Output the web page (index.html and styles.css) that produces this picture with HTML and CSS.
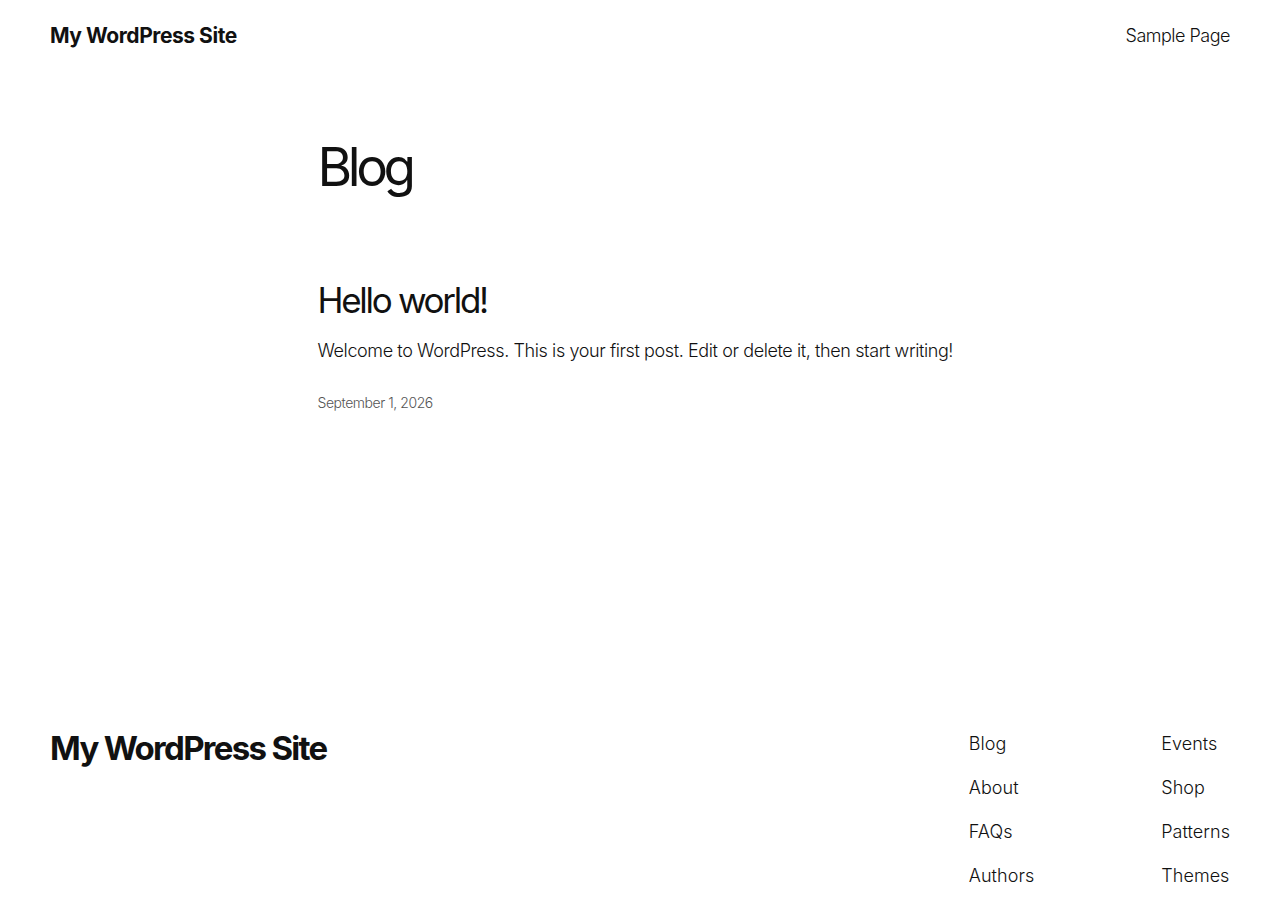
FILE: index.html
```html
<!DOCTYPE html>
<html lang="en">
<head>
  <meta charset="UTF-8" />
  <meta name="viewport" content="width=device-width, initial-scale=1.0" />
  <title>Blog – My WordPress Site</title>
  <link rel="stylesheet" href="styles.css">
</head>
<body>
  <header class="site-header">
    <a class="site-title" href="#">My WordPress Site</a>
    <nav class="main-nav">
      <a href="#">Sample Page</a>
    </nav>
  </header>

  <main class="site-main">
    <h1 class="page-title">Blog</h1>

    <article class="post">
      <h2 class="post-title"><a href="#">Hello world!</a></h2>
      <p class="post-excerpt">Welcome to WordPress. This is your first post. Edit or delete it, then start writing!</p>
      <div class="post-date">September 1, 2026</div>
    </article>
  </main>

  <footer class="site-footer">
    <a class="footer-title" href="#">My WordPress Site</a>
    <div class="footer-nav">
      <ul>
        <li><a href="#">Blog</a></li>
        <li><a href="#">About</a></li>
        <li><a href="#">FAQs</a></li>
        <li><a href="#">Authors</a></li>
      </ul>
      <ul>
        <li><a href="#">Events</a></li>
        <li><a href="#">Shop</a></li>
        <li><a href="#">Patterns</a></li>
        <li><a href="#">Themes</a></li>
      </ul>
    </div>
  </footer>
</body>
</html>
```

FILE: styles.css
```css
body {
  margin: 0;
  font-family: Inter, "Noto Sans", sans-serif;
  color: #111111;
  background: #ffffff;
  -webkit-font-smoothing: antialiased;
}

a {
  color: inherit;
  text-decoration: none;
}

.site-header {
  display: flex;
  justify-content: space-between;
  align-items: center;
  height: 70px;
  padding: 0 50px;
}

.site-title {
  font-size: 21px;
  font-weight: 700;
  letter-spacing: -0.45px;
}

.main-nav a {
  font-size: 18px;
  font-weight: 300;
  letter-spacing: -0.5px;
}

.site-main {
  width: 645px;
  margin: 0 auto;
  padding-top: 66px;
  min-height: 591px;
}

.page-title {
  margin: 0;
  font-size: 53px;
  font-weight: 400;
  line-height: 1.2;
  letter-spacing: -4.4px;
}

.post {
  margin-top: 79px;
}

.post-title {
  margin: 0;
  font-size: 35px;
  font-weight: 400;
  line-height: 1.2;
  letter-spacing: -2.3px;
}

.post-excerpt {
  margin: 17px 0 0;
  font-size: 18px;
  font-weight: 300;
  line-height: 1.4;
  letter-spacing: -0.4px;
}

.post-date {
  margin-top: 31px;
  font-size: 14px;
  font-weight: 300;
  color: #555555;
  letter-spacing: -0.45px;
}

.site-footer {
  display: flex;
  justify-content: space-between;
  align-items: flex-start;
  padding: 0 50px;
}

.footer-title {
  margin-top: 2px;
  font-size: 33px;
  font-weight: 700;
  letter-spacing: -1.7px;
  line-height: 1.2;
}

.footer-nav {
  display: flex;
  gap: 127px;
  margin-top: 4px;
}

.footer-nav ul {
  list-style: none;
  margin: 0;
  padding: 0;
  display: flex;
  flex-direction: column;
  gap: 19px;
}

.footer-nav a {
  font-size: 18px;
  font-weight: 300;
  line-height: 25px;
  letter-spacing: 0.05px;
}
```
